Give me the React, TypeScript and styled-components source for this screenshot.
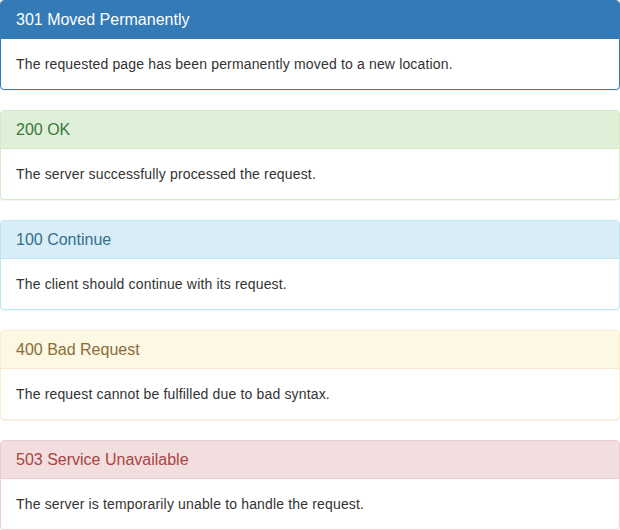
import React from 'react';
import styled, { createGlobalStyle } from 'styled-components';

// Page reset, Bootstrap-like base text
const GlobalStyle = createGlobalStyle`
  * { box-sizing: border-box; }
  body {
    margin: 0;
    font-family: 'Liberation Sans', Arial, Helvetica, sans-serif;
    font-size: 14px;
    line-height: 20px;
    color: #333;
    background: #fff;
  }
`;

type Variant = 'primary' | 'success' | 'info' | 'warning' | 'danger';

// colours per panel kind: border, heading background, heading text
const palette: Record<Variant, { border: string; bg: string; text: string }> = {
  primary: { border: '#337ab7', bg: '#337ab7', text: '#fff' },
  success: { border: '#d6e9c6', bg: '#dff0d8', text: '#3c763d' },
  info: { border: '#bce8f1', bg: '#d9edf7', text: '#31708f' },
  warning: { border: '#faebcc', bg: '#fcf8e3', text: '#8a6d3b' },
  danger: { border: '#ebccd1', bg: '#f2dede', text: '#a94442' },
};

const List = styled.div`
  display: flex;
  flex-direction: column;
  gap: 20px;
`;

const Panel = styled.div<{ $variant: Variant }>`
  background: #fff;
  border: 1px solid ${p => palette[p.$variant].border};
  border-radius: 4px;
  box-shadow: 0 1px 1px rgba(0, 0, 0, 0.05);
  overflow: hidden;
`;

const Heading = styled.div<{ $variant: Variant }>`
  padding: 10px 15px;
  background: ${p => palette[p.$variant].bg};
  color: ${p => palette[p.$variant].text};
  border-bottom: 1px solid ${p => palette[p.$variant].border};
`;

const Title = styled.h3`
  margin: 0;
  font-size: 16px;
  font-weight: 400;
  line-height: 17px;
`;

const Body = styled.div`
  padding: 15px;
  letter-spacing: 0.16px;
`;

const statuses: { variant: Variant; title: string; text: string }[] = [
  { variant: 'primary', title: '301 Moved Permanently', text: 'The requested page has been permanently moved to a new location.' },
  { variant: 'success', title: '200 OK', text: 'The server successfully processed the request.' },
  { variant: 'info', title: '100 Continue', text: 'The client should continue with its request.' },
  { variant: 'warning', title: '400 Bad Request', text: 'The request cannot be fulfilled due to bad syntax.' },
  { variant: 'danger', title: '503 Service Unavailable', text: 'The server is temporarily unable to handle the request.' },
];

const App: React.FC = () => {
  return (
    <>
      <GlobalStyle />
      <List>
        {statuses.map(s => (
          <Panel key={s.title} $variant={s.variant}>
            <Heading $variant={s.variant}>
              <Title>{s.title}</Title>
            </Heading>
            <Body>{s.text}</Body>
          </Panel>
        ))}
      </List>
    </>
  );
};

export default App;
